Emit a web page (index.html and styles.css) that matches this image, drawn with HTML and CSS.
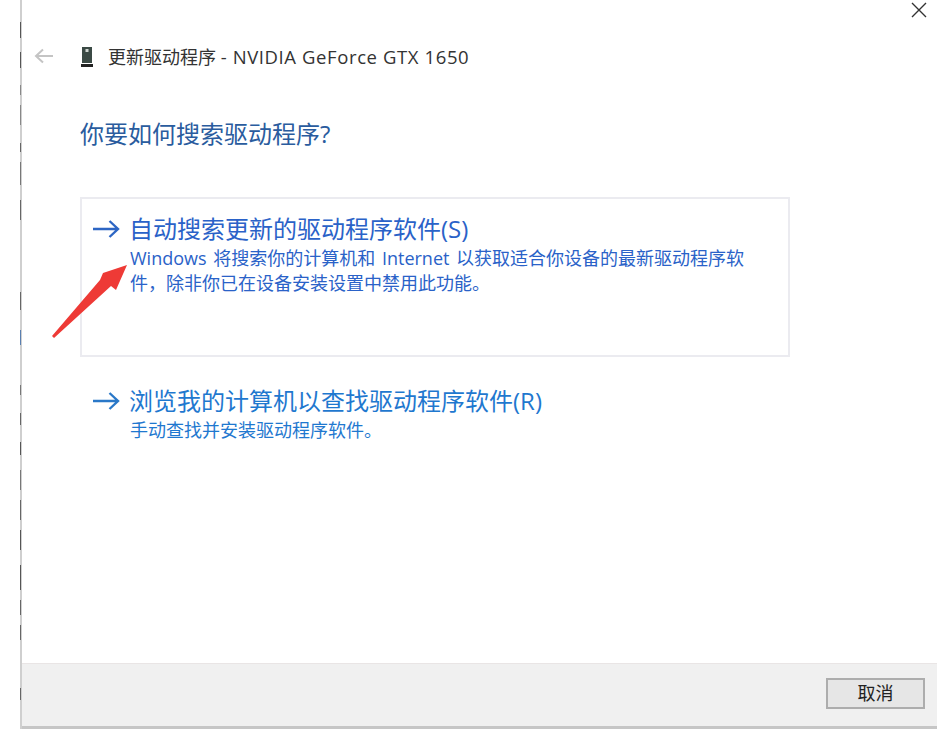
FILE: index.html
```html
<!DOCTYPE html>
<html lang="zh-CN">
<head>
<meta charset="utf-8">
<title>更新驱动程序</title>
<link rel="stylesheet" href="styles.css">
</head>
<body>
<div class="window">
  <main class="main">
    <div class="close-row">
      <svg class="close" width="16" height="16" viewBox="0 0 16 16"><path d="M1 1 L15 15 M15 1 L1 15" stroke="#333" stroke-width="1.4" fill="none"/></svg>
    </div>
    <div class="titlebar">
      <svg class="back" width="20" height="16" viewBox="0 0 20 16"><path d="M2 8 H19 M9 1.5 L2 8 L9 14.5" stroke="#c4c4c4" stroke-width="2" fill="none"/></svg>
      <svg class="device" width="14" height="22" viewBox="0 0 14 22"><rect x="2" y="1" width="10" height="16" fill="#3b4a45"/><rect x="5.5" y="3" width="3" height="3" fill="#cfd6d2"/><rect x="1" y="18" width="12" height="3" fill="#222"/></svg>
      <span class="title-text">更新驱动程序 <span class="title-latin">- NVIDIA GeForce GTX 1650</span></span>
    </div>
    <h1 class="heading">你要如何搜索驱动程序?</h1>
    <div class="option option-boxed">
      <div class="option-head">
        <svg class="go" width="28" height="20" viewBox="0 0 28 20"><path d="M1 10 H26 M17.5 2 L26 10 L17.5 18" stroke="#2d66c4" stroke-width="2.4" fill="none"/></svg>
        <span class="option-title">自动搜索更新的驱动程序软件(S)</span>
      </div>
      <p class="option-desc">Windows 将搜索你的计算机和 Internet 以获取适合你设备的最新驱动程序软件，除非你已在设备安装设置中禁用此功能。</p>
    </div>
    <div class="option option-plain">
      <div class="option-head">
        <svg class="go" width="28" height="20" viewBox="0 0 28 20"><path d="M1 10 H26 M17.5 2 L26 10 L17.5 18" stroke="#2a78c8" stroke-width="2.4" fill="none"/></svg>
        <span class="option-title">浏览我的计算机以查找驱动程序软件(R)</span>
      </div>
      <p class="option-desc">手动查找并安装驱动程序软件。</p>
    </div>
    <svg class="annotation" width="84" height="92" viewBox="0 0 84 92"><path d="M1 89 L49 33 L52 26 L76 18 L65 43 L60 39 L3 91 Z" fill="#ee3a36"/></svg>
  </main>
  <footer class="footer">
    <button class="cancel" type="button">取消</button>
  </footer>
</div>
</body>
</html>
```
FILE: styles.css
```css
html, body {
  margin: 0;
  padding: 0;
  background: #fff;
}
body {
  width: 937px;
  height: 731px;
  overflow: hidden;
  font-family: "Open Sans", "Noto Sans CJK SC", sans-serif;
}
.window {
  position: relative;
  margin-left: 20px;
  height: 729px;
  display: flex;
  flex-direction: column;
  border-left: 2px solid #cfcfcf;
  box-sizing: border-box;
}
.window::before {
  content: "";
  position: absolute;
  left: -2px;
  top: 0;
  width: 1px;
  height: 700px;
  background: linear-gradient(to bottom,
    transparent 22px, #555 22px, #555 38px, transparent 38px,
    transparent 52px, #555 52px, #555 68px, transparent 68px,
    transparent 85px, #888 85px, #888 95px, transparent 95px,
    transparent 105px, #888 105px, #888 125px, transparent 125px,
    transparent 143px, #666 143px, #666 152px, transparent 152px,
    transparent 162px, #777 162px, #777 185px, transparent 185px,
    transparent 200px, #666 200px, #666 220px, transparent 220px,
    transparent 292px, #666 292px, #666 310px, transparent 310px,
    transparent 330px, #5a7fb0 330px, #5a7fb0 345px, transparent 345px,
    transparent 385px, #777 385px, #777 395px, transparent 395px,
    transparent 413px, #666 413px, #666 425px, transparent 425px,
    transparent 442px, #555 442px, #555 455px, transparent 455px,
    transparent 470px, #777 470px, #777 490px, transparent 490px,
    transparent 500px, #666 500px, #666 520px, transparent 520px,
    transparent 530px, #555 530px, #555 550px, transparent 550px,
    transparent 565px, #555 565px, #555 590px, transparent 590px,
    transparent 600px, #666 600px, #666 615px, transparent 615px,
    transparent 625px, #666 625px, #666 640px, transparent 640px,
    transparent 688px, #666 688px, #666 700px);
}
.main {
  flex: 1;
  position: relative;
  padding-left: 58px;
}
.close-row {
  display: flex;
  justify-content: flex-end;
  padding: 2px 10px 0 0;
  height: 30px;
  box-sizing: border-box;
}
.titlebar {
  display: flex;
  align-items: center;
  height: 52px;
  margin-left: -46px;
}
.back {
  margin-right: 26px;
}
.device {
  margin: 2px 14px 0 0;
}
.title-text {
  font-size: 18px;
  color: #333;
  white-space: nowrap;
}
.title-latin {
  font-size: 18.5px;
  letter-spacing: 0.6px;
}
.heading {
  margin: 33px 0 0;
  font-weight: 400;
  font-size: 24px;
  line-height: 38px;
  color: #2a5c9e;
  height: 82px;
}
.option {
  width: 710px;
  box-sizing: border-box;
  padding: 13px 30px 0 10px;
}
.option-boxed {
  height: 160px;
  border: 2px solid #ebebf0;
  color: #2a62c8;
}
.option-plain {
  margin-top: 14px;
  padding-left: 12px;
  color: #1f78cf;
}
.option-head {
  display: flex;
  align-items: center;
  height: 34px;
}
.go {
  margin-right: 9px;
  flex: none;
}
.option-title {
  font-size: 24px;
  line-height: 34px;
  white-space: nowrap;
}
.option-desc {
  margin: 0 0 0 38px;
  font-size: 18px;
  line-height: 25px;
  word-spacing: 2px;
}
.annotation {
  position: absolute;
  left: 29px;
  top: 247px;
}
.footer {
  height: 66px;
  box-sizing: border-box;
  background: #f0f0f0;
  border-top: 1px solid #e9e5e5;
  border-bottom: 3px solid #c6c6c6;
  display: flex;
  justify-content: flex-end;
  align-items: flex-start;
  padding: 14px 12px 0 0;
}
.cancel {
  width: 99px;
  height: 31px;
  box-sizing: border-box;
  background: #e6e6e6;
  border: 2px solid #adadad;
  font-family: inherit;
  font-size: 18px;
  line-height: 25px;
  padding: 0;
  color: #222;
}
```
